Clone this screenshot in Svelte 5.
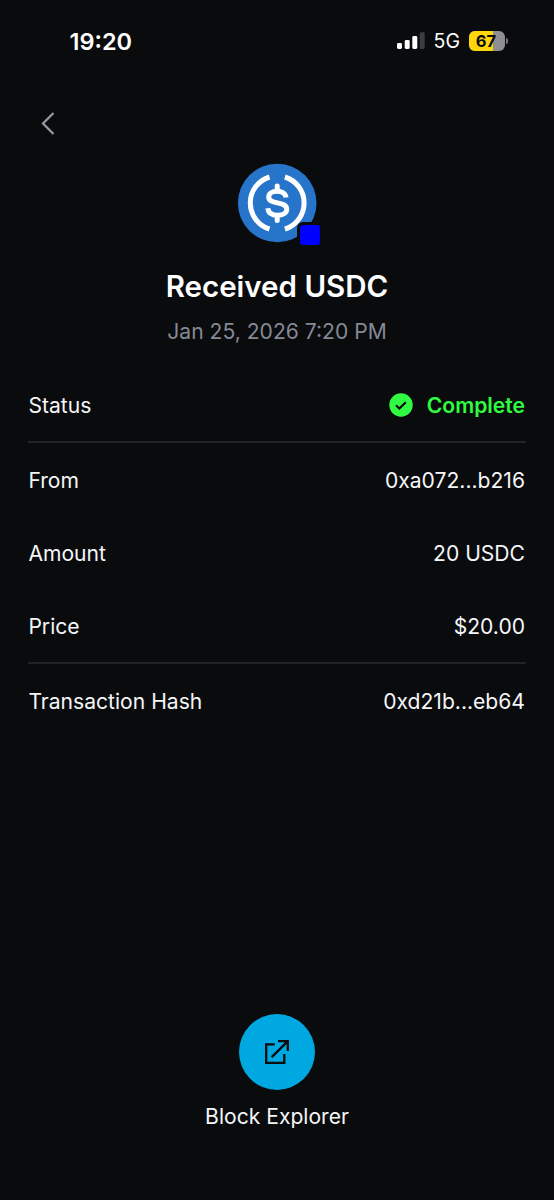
<script lang="ts">
    const groups = [
        [{ label: "From", value: "0xa072...b216" }, { label: "Amount", value: "20 USDC" }, { label: "Price", value: "$20.00" }],
        [{ label: "Transaction Hash", value: "0xd21b...eb64" }],
    ]

    let battery = 67
</script>

<main>
    <header class="statusbar">
        <span class="time">19:20</span>
        <div class="indicators">
            <svg class="signal" width="28" height="18" viewBox="0 0 28 18">
                <rect x="0" y="11" width="5" height="6" rx="1.4" fill="#fff" />
                <rect x="7.7" y="8" width="5" height="9" rx="1.4" fill="#fff" />
                <rect x="15.3" y="4" width="5" height="13" rx="1.4" fill="#fff" />
                <rect x="22.7" y="0.3" width="5" height="16.7" rx="1.4" fill="#3c3d3f" />
            </svg>
            <span class="network">5G</span>
            <div class="battery">
                <div class="level" style="width: {battery}%"></div>
                <span>{battery}</span>
            </div>
            <div class="cap"></div>
        </div>
    </header>

    <button class="back" aria-label="Back">
        <svg width="16" height="24" viewBox="0 0 16 24">
            <path d="M13.500 2 3 12.500l10.500 10.500" fill="none" stroke="#979aa3" stroke-width="2.200" />
        </svg>
    </button>

    <section class="summary">
        <div class="token">
            <svg width="80" height="80" viewBox="0 0 80 80">
                <circle cx="40.200" cy="40" r="39.300" fill="#2775ca" />
                <g fill="none" stroke="#fff" stroke-width="5">
                    <path d="M32.500 14a27.200 27.200 0 0 0 0 52" />
                    <path d="M47.900 14a27.200 27.200 0 0 1 0 52" />
                    <path d="M49 34.500C48.500 30.300 44.700 28.200 40.200 28.200c-5 0-8.500 2.200-8.500 5.700 0 8.400 18 3.400 18 12.400 0 3.600-3.900 6-9.200 6-5.500 0-9.200-2.300-9.700-7" />
                    <path stroke-linecap="round" d="M40.200 23v4M40.200 53v4.500" />
                </g>
            </svg>
            <span class="chain"></span>
        </div>
        <h1>Received USDC</h1>
        <p>Jan 25, 2026 7:20 PM</p>
    </section>

    <section class="details">
        <div class="row status">
            <span>Status</span>
            <strong>
                <svg width="24" height="24" viewBox="0 0 24 24">
                    <circle cx="12" cy="12" r="11.700" fill="#30fb42" />
                    <path d="m7 12.300 3.300 3.200 6.500-6.300" fill="none" stroke="#0a0b0d" stroke-width="2.200" />
                </svg>
                Complete
            </strong>
        </div>
        {#each groups as rows}
            <div class="group">
                {#each rows as row}
                    <div class="row">
                        <span>{row.label}</span>
                        <span>{row.value}</span>
                    </div>
                {/each}
            </div>
        {/each}
    </section>

    <footer>
        <button class="explorer" aria-label="Block Explorer">
            <svg width="26" height="26" viewBox="0 0 26 26">
                <g fill="none" stroke="#0a0b0d" stroke-width="2.300">
                    <path d="M10.800 5.400H2.200v18.500h18.100v-9" />
                    <path d="M14 2.200h9.800v9.800M23.600 2.400 7.700 18.100" />
                </g>
            </svg>
        </button>
        <span>Block Explorer</span>
    </footer>
</main>

<style>
    :global(body) {
        background: #0a0b0d;
    }

    main {
        height: 1200px;
        box-sizing: border-box;
        display: flex;
        flex-direction: column;
        overflow: hidden;

        background: #0a0b0d;
        color: #f5f6f8;
        font-family: Inter, sans-serif;
        font-size: 21.1px;
    }

    button {
        border: none;
        padding: 0;
        background: none;
        cursor: pointer;
    }

    svg {
        display: block;
    }

    .statusbar {
        height: 82px;
        padding: 0 46px 0 69.500px;
        display: flex;
        align-items: center;
        justify-content: space-between;
        color: #fff;
    }

    .time {
        font-size: 23.5px;
        font-weight: 600;
    }

    .indicators {
        display: flex;
        align-items: center;
    }

    .network {
        margin: 0 9px;
        font-size: 19.5px;
    }

    .battery {
        position: relative;
        width: 36px;
        height: 20px;
        border-radius: 6px;
        overflow: hidden;
        background: #8e8e93;
        text-align: center;
    }

    .level {
        position: absolute;
        left: 0;
        top: 0;
        height: 100%;
        background: #ffd60a;
    }

    .battery span {
        position: relative;
        display: block;
        margin-right: 2px;
        font-size: 16.5px;
        font-weight: 700;
        line-height: 20px;
        color: #0a0b0d;
    }

    .cap {
        width: 2px;
        height: 6px;
        margin-left: 1px;
        border-radius: 0 2px 2px 0;
        background: #77787b;
    }

    .back {
        width: 16px;
        height: 24px;
        margin: 29px 0 0 40px;
    }

    .summary {
        margin-top: 28px;
        display: flex;
        flex-direction: column;
        align-items: center;
    }

    .token {
        position: relative;
    }

    .chain {
        position: absolute;
        right: -3px;
        bottom: -2px;
        width: 20px;
        height: 20px;
        border-radius: 3px;
        background: #0000ff;
        box-shadow: 0 0 0 3px #0a0b0d;
    }

    h1 {
        margin: 25px 0 0;
        font-size: 29.5px;
        line-height: 36px;
        font-weight: 600;
        color: #fff;
    }

    p {
        margin: 14px 0 0;
        line-height: 28px;
        color: #858995;
    }

    .details {
        margin: 22px 28px 0;
    }

    .row {
        height: 73px;
        box-sizing: border-box;
        padding: 2px 1px 0 0.4px;
        display: flex;
        align-items: center;
        justify-content: space-between;
    }

    .status {
        padding-top: 1px;
    }

    .group {
        border-top: 2px solid #222327;
    }

    strong {
        display: flex;
        align-items: center;
        gap: 14px;
        font-weight: 600;
        color: #30fb42;
    }

    footer {
        margin-top: auto;
        padding-bottom: 69px;
        display: flex;
        flex-direction: column;
        align-items: center;
        line-height: 28px;
    }

    .explorer {
        width: 76px;
        height: 76px;
        margin-bottom: 13px;
        border-radius: 50%;
        display: flex;
        align-items: center;
        justify-content: center;
        background: #00a8e1;
    }
</style>
